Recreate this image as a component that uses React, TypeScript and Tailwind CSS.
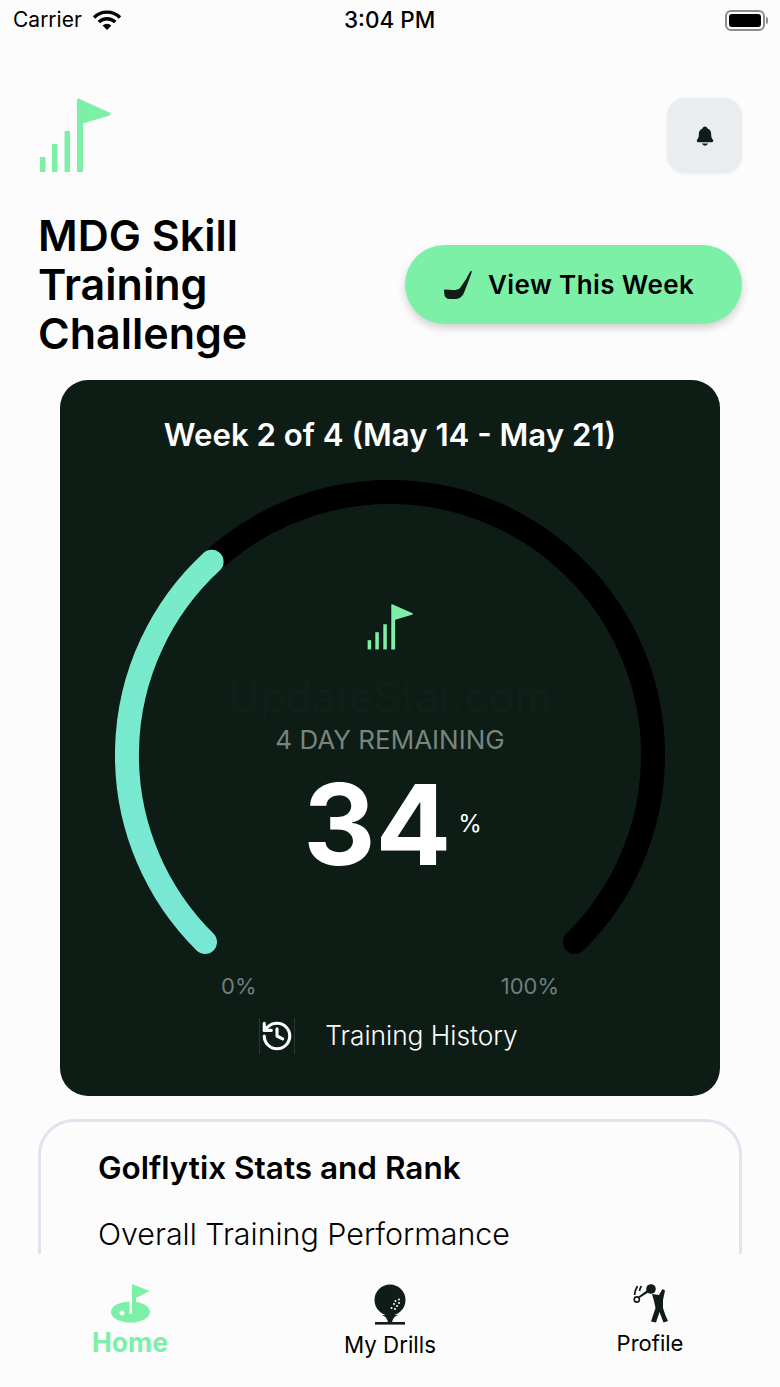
import { History } from "lucide-react";
import { IoNotifications } from "react-icons/io5";

function FlagLogo({ className }: { className?: string }) {
  return (
    <svg viewBox="0 0 72 75" preserveAspectRatio="none" className={className} fill="#7df0a8">
      <rect x="1" y="59" width="5.500" height="15" />
      <rect x="13" y="46" width="5.500" height="28" />
      <rect x="25.500" y="33" width="5.500" height="41" />
      <path d="M38 74V1.500Q38 0 39.500 .6L70.500 14.500Q73 16 70.500 17.400L44 25.500V74Z" />
    </svg>
  );
}

function WifiIcon() {
  return (
    <svg viewBox="0 0 30 22" className="h-[22px] w-[30px]" fill="none" stroke="#000" strokeWidth="3.4">
      <path d="M2 8.500a18.500 18.500 0 0 1 26 0" />
      <path d="M6.800 13a11.800 11.800 0 0 1 16.400 0" />
      <path d="M15 21l-4.400-4.400a6.200 6.200 0 0 1 8.800 0Z" fill="#000" stroke="none" />
    </svg>
  );
}

function ClubIcon() {
  return (
    <svg viewBox="0 0 28 28" className="h-7 w-7" fill="#0f1c17">
      <path d="M26.500 0 28 .5Q24 12 19.500 23 17 27.500 12 28H6Q.5 28 .2 22L0 19.500Q0 18.500 1 18.500L9 19Q14 19 16 17 22 9 26.500 0Z" />
    </svg>
  );
}

function Gauge() {
  return (
    <svg viewBox="0 0 550 475" className="h-[475px] w-[550px]" fill="none" strokeLinecap="round" strokeWidth="24">
      <defs>
        <linearGradient id="gaugeFill" x1="0" y1="0" x2="0" y2="1">
          <stop offset="0" stopColor="#78ebc8" />
          <stop offset="1" stopColor="#78e8d6" />
        </linearGradient>
      </defs>
      <path d="M90 462A263 263 0 1 1 460 462" stroke="#000" />
      <path d="M90 462A263 263 0 0 1 96.600 81.700" stroke="url(#gaugeFill)" />
    </svg>
  );
}

function TeeIcon() {
  return (
    <svg viewBox="0 0 32 42" className="h-[42px] w-8" fill="#0f1c17">
      <circle cx="16" cy="16" r="15.500" />
      <path d="M7.500 31h17q-5 1-6.500 7h-4q-1.500-6-6.500-7Z" />
      <rect x="1" y="38" width="30" height="2.600" />
      <g fill="#fcfcfc">
        <circle cx="25" cy="15.500" r="1" />
        <circle cx="21.500" cy="17" r="1" />
        <circle cx="25" cy="19" r="1" />
        <circle cx="20" cy="20" r="1" />
        <circle cx="23" cy="22" r="1" />
        <circle cx="17.500" cy="24" r="1" />
        <circle cx="21" cy="25" r="1" />
      </g>
    </svg>
  );
}

function HoleIcon() {
  return (
    <svg viewBox="0 0 41 39" className="h-[39px] w-[41px]" fill="#7df0a8">
      <ellipse cx="20.500" cy="28" rx="19.500" ry="10.500" />
      <path d="M19.500 16h2.500v14h-2.500Z" fill="#fcfcfc" />
      <path d="M22 0 39.500 7 26 14V29h-4Z" />
      <circle cx="12" cy="29" r="2.500" fill="#fcfcfc" />
    </svg>
  );
}

function GolferIcon() {
  return (
    <svg viewBox="0 0 36 40" className="h-10 w-9" fill="#0f1c17">
      <circle cx="19" cy="5" r="4.800" />
      <path d="M20 10 27 11 30.500 5 33 6.500 31 16 31 24Q33 31 36 37L31.500 38.500 27.500 28 24 38.500 19 37.500 23.500 24 22 17Z" />
      <path d="M16 5.500 6.500 12.500 7.500 14 17 8Z" />
      <circle cx="4.800" cy="15.500" r="2.600" fill="none" stroke="#0f1c17" strokeWidth="1.600" />
      <path d="M2.500 11q.5-5 3-9M7.500 7q.5-3 2-5" fill="none" stroke="#0f1c17" strokeWidth="1.800" />
    </svg>
  );
}

export default function App() {
  return (
    <div className="flex h-[1387px] w-[780px] flex-col overflow-hidden bg-[#fcfcfc] font-['Inter',sans-serif] text-black">
      {/* Status bar */}
      <div className="relative flex h-10 shrink-0 items-center justify-between pl-[13px] pr-[12px] text-[21px]">
        <div className="flex items-center gap-[10px]">
          <span>Carrier</span>
          <WifiIcon />
        </div>
        <span className="absolute left-[344px] text-[22.500px] font-medium">3:04 PM</span>
        <div className="flex items-center gap-[1px]">
          <div className="h-[21px] w-10 rounded-[6px] border-2 border-[#8c8c8c] p-[2px]">
            <div className="h-full w-full rounded-[3px] bg-black" />
          </div>
          <div className="h-[7px] w-[2px] rounded-r bg-[#8c8c8c]" />
        </div>
      </div>

      <div className="min-h-0 flex-1 overflow-hidden">
        {/* Header */}
        <div className="flex items-start justify-between pl-[39px] pr-[38px] pt-[58px]">
          <FlagLogo className="h-[75px] w-[72px]" />
          <button className="flex h-[75px] w-[75px] items-center justify-center rounded-[18px] bg-[#e9edef] shadow-[0_1px_4px_rgba(0,0,0,0.05)]">
            <IoNotifications className="h-[22px] w-[22px] text-[#0f1c17]" />
          </button>
        </div>

        <div className="flex items-center justify-between pl-[38px] pr-[38px] pt-[38px]">
          <h1 className="w-[240px] text-[43px] leading-[49px] font-semibold">MDG Skill Training Challenge</h1>
          <button className="flex h-[79px] w-[337px] items-center gap-[16px] rounded-[40px] bg-[#7df0a8] pl-[39px] text-[26px] font-semibold shadow-[0_4px_8px_rgba(0,0,0,0.18)]">
            <ClubIcon />
            <span className="tracking-[0.4px]">View This Week</span>
          </button>
        </div>

        {/* Progress card */}
        <div className="mx-[60px] mt-[22px] flex h-[716px] flex-col items-center rounded-[28px] bg-[#0e1c16] pt-10 text-white">
          <div className="text-[31.200px] leading-[30px] font-semibold">Week 2 of 4 (May 14 - May 21)</div>
          <div className="relative mt-[30px] h-[475px] w-[550px]">
            <Gauge />
            <div className="absolute inset-0 flex flex-col items-center pt-[124px]">
              <FlagLogo className="h-[46px] w-[46px]" />
              <div className="absolute top-[200px] text-[42.500px] leading-[34px] text-[#111f19]">UpdateStar.com</div>
              <div className="mt-[74px] text-[26px] leading-[32px] text-[#76867f]">4 DAY REMAINING</div>
              <div className="ml-[5px] mt-[8px] flex items-center gap-[7px]">
                <span className="text-[112px] leading-[120px] font-bold">34</span>
                <span className="text-[24px] leading-[30px]">%</span>
              </div>
            </div>
          </div>
          <div className="mt-[18px] flex w-[338px] justify-between text-[22px] leading-[27px] text-[#6f7f79]">
            <span>0%</span>
            <span>100%</span>
          </div>
          <div className="mt-[18px] flex items-center gap-[30px] pr-[3px]">
            <div className="flex h-[36px] w-[36px] items-center justify-center border-x border-[#2b3933]">
              <History className="h-[36px] w-[36px] text-white" strokeWidth={2.2} />
            </div>
            <span className="text-[26.300px] leading-[34px] font-light">Training History</span>
          </div>
        </div>

        {/* Stats card, cut off by the tab bar */}
        <div className="mx-[38px] mt-[23px] h-[300px] rounded-t-[36px] border-[3px] border-[#dfe4ed] pl-[57px] pt-[28px]">
          <div className="text-[31.500px] leading-[36px] font-semibold">Golflytix Stats and Rank</div>
          <div className="mt-[30px] text-[30.400px] leading-[36px] font-light">Overall Training Performance</div>
        </div>
      </div>

      {/* Tab bar */}
      <nav className="grid h-[133px] shrink-0 grid-cols-3 bg-[#fcfcfc] pt-[30px]">
        <div className="flex flex-col items-center">
          <HoleIcon />
          <span className="mt-[2px] text-[26.500px] leading-[34px] font-bold text-[#7df0a8]">Home</span>
        </div>
        <div className="flex flex-col items-center">
          <TeeIcon />
          <span className="mt-[2px] text-[22.300px] leading-[34px]">My Drills</span>
        </div>
        <div className="flex flex-col items-center">
          <GolferIcon />
          <span className="mt-[3px] text-[22px] leading-[32px]">Profile</span>
        </div>
      </nav>
    </div>
  );
}
